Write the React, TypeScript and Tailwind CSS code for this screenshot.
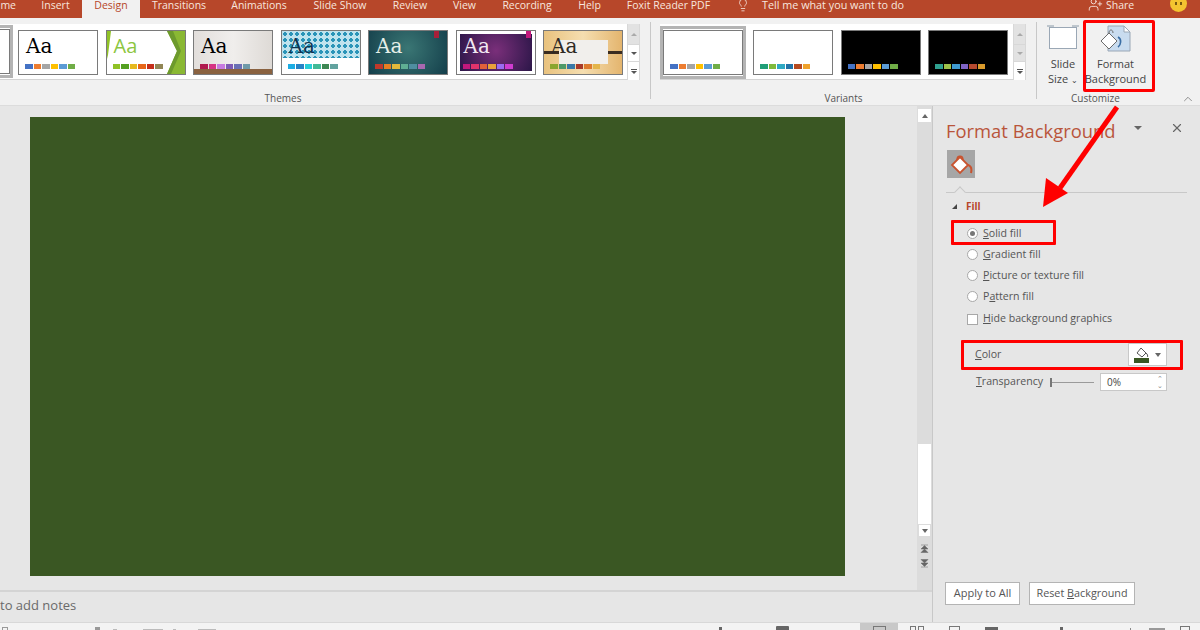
import type { ReactNode } from 'react';
import { ChevronUp, Lightbulb, UserPlus, X } from 'lucide-react';

type Theme = {
  box: string;
  aa: string;
  colors: string[];
  extra?: ReactNode;
  sans?: boolean;
};

const office = ['#4472c4', '#ed7d31', '#a5a5a5', '#ffc000', '#5b9bd5', '#70ad47'];

const themes: Theme[] = [
  { box: 'bg-white', aa: 'text-black', colors: office },
  {
    box: 'bg-white',
    aa: 'text-[#8cc63f]',
    sans: true,
    colors: ['#90c226', '#54a021', '#e6b91e', '#e76618', '#c42f1a', '#918655'],
    extra: (
      <svg className="absolute inset-0" width="78" height="43" viewBox="0 0 78 43">
        <polygon points="60,0 78,0 78,43 60,43 70,20" fill="#8ab833" />
        <polygon points="60,0 66,0 74,20 64,43 60,43 70,20" fill="#6d9a2d" />
        <polygon points="0,0 4,0 1,24 0,28" fill="#90c226" />
      </svg>
    ),
  },
  {
    box: 'bg-[linear-gradient(90deg,#e2dedb,#f0eeec_50%,#dedad6)]',
    aa: 'text-black',
    colors: ['#b01a4e', '#d63384', '#c77be0', '#7d5ab5', '#6a6fb5', '#6f9aa8'],
    extra: <div className="absolute inset-x-0 bottom-0 h-[5px] bg-[#8a6240]" />,
  },
  {
    box: 'bg-white',
    aa: 'text-[#0f3350]',
    colors: ['#1cade4', '#2683c6', '#27ced7', '#42ba97', '#3e8853', '#62a39f'],
    extra: (
      <div className="absolute inset-x-0 top-0 h-[27px] bg-[#2e9fc0] bg-[radial-gradient(circle,#2a94b8_42%,#bfe3ee_46%)] bg-[length:6px_6px]" />
    ),
  },
  {
    box: 'bg-[radial-gradient(circle_at_50%_40%,#3a7674,#143f4b)]',
    aa: 'text-[#e6efe9]',
    colors: ['#c0392b', '#e67e22', '#e2b93b', '#5fae93', '#4f8ea0', '#a868b0'],
    extra: <div className="absolute right-[8px] top-0 h-[7px] w-[5px] bg-[#a8203a]" />,
  },
  {
    box: 'bg-white',
    aa: 'text-[#f2e8f2]',
    colors: ['#c2187c', '#e0336b', '#e2603a', '#e8a13a', '#9a6cf0', '#cf3ccf'],
    extra: (
      <>
        <div className="absolute inset-x-[3px] bottom-[3px] top-[3px] bg-[radial-gradient(circle_at_50%_45%,#7a2f7a,#2b1648)]" />
        <div className="absolute right-[4px] top-0 h-[7px] w-[5px] bg-[#c2187c]" />
      </>
    ),
  },
  {
    box: 'bg-[linear-gradient(90deg,#e9c27e,#f5deb0_50%,#e4b56e)]',
    aa: 'text-[#2f2a25]',
    colors: ['#8aa62e', '#4f9a6a', '#3a78a8', '#a83a2a', '#dd7a2e', '#e4b54a'],
    extra: (
      <>
        <div className="absolute inset-x-0 top-[20px] h-[3px] bg-[#3a2c20]" />
        <div className="absolute left-[15px] top-[9px] h-[24px] w-[49px] bg-[#f1efec]" />
      </>
    ),
  },
];

const variants: Theme[] = [
  { box: 'bg-white', aa: '', colors: ['#1f9e77', '#7fba3c', '#2fa9c4', '#2273a8', '#b5491f', '#efa22b'] },
  { box: 'bg-black', aa: '', colors: office },
  { box: 'bg-black', aa: '', colors: ['#2fa08f', '#9cc24a', '#3f9ad0', '#7f63c4', '#b5492f', '#d99a2b'] },
];

function Swatches({ colors }: { colors: string[] }) {
  return (
    <div className="flex gap-[1px]">
      {colors.map((c, i) => (
        <div key={i} className="h-[5px] w-[7.5px]" style={{ background: c }} />
      ))}
    </div>
  );
}

function ThemeThumb({ t }: { t: Theme }) {
  return (
    <div className={`relative h-[45px] w-[80px] shrink-0 overflow-hidden border border-[#7a7a7a] ${t.box}`}>
      {t.extra}
      <div
        className={`absolute left-[7px] top-[2px] text-[20px] leading-[26px] ${t.aa}`}
        style={{ fontFamily: t.sans ? '"Open Sans", sans-serif' : '"DejaVu Serif", serif' }}
      >
        Aa
      </div>
      <div className="absolute bottom-[5px] left-[6px]">
        <Swatches colors={t.colors} />
      </div>
    </div>
  );
}

function VariantThumb({ t }: { t: Theme }) {
  return (
    <div className={`relative h-[45px] w-[80px] shrink-0 border border-[#7a7a7a] ${t.box}`}>
      <div className="absolute bottom-[5px] left-[6px]">
        <Swatches colors={t.colors} />
      </div>
    </div>
  );
}

function GalleryScroll({ active }: { active?: boolean }) {
  return (
    <div className="flex h-[56px] w-[13px] shrink-0 flex-col border-x border-[#d8d8d8] text-[#555]">
      <div className="flex h-[20px] items-center justify-center bg-[#e2e2e2]">
        <div className="h-0 w-0 border-x-[3px] border-b-[3px] border-x-transparent border-b-[#aaa]" />
      </div>
      <div className={`flex h-[18px] items-center justify-center border-y border-[#d8d8d8] ${active ? 'bg-white' : 'bg-[#e2e2e2]'}`}>
        <div className={`h-0 w-0 border-x-[3px] border-t-[3px] border-x-transparent ${active ? 'border-t-[#555]' : 'border-t-[#aaa]'}`} />
      </div>
      <div className="flex flex-1 flex-col items-center justify-center gap-[1px] bg-white">
        <div className="h-[1px] w-[6px] bg-[#555]" />
        <div className="h-0 w-0 border-x-[3px] border-t-[3px] border-x-transparent border-t-[#555]" />
      </div>
    </div>
  );
}

function Radio({ label, checked }: { label: [string, string, string]; checked?: boolean }) {
  return (
    <div className="flex h-[21px] items-center pl-[16px]">
      <div className="flex h-[11px] w-[11px] items-center justify-center rounded-full border border-[#a8a8a8] bg-white">
        {checked && <div className="h-[5px] w-[5px] rounded-full bg-[#777]" />}
      </div>
      <span className="ml-[5px] text-[10.6px] text-[#555]">
        {label[0]}
        <span className="underline">{label[1]}</span>
        {label[2]}
      </span>
    </div>
  );
}

function BucketIcon() {
  return (
    <svg width="24" height="24" viewBox="0 0 24 24">
      <path d="M11 5 L3 13 L11 21 L19 13 Z" fill="#fff" stroke="#c8532f" strokeWidth="1.8" />
      <path d="M8 8 C8 3 14 3 14 8" stroke="#c8532f" strokeWidth="1.4" fill="none" />
      <path d="M19 13 C22 14 23 17 22 21" stroke="#c8532f" strokeWidth="2" fill="none" />
    </svg>
  );
}

function DoubleArrow({ up }: { up?: boolean }) {
  return (
    <svg width="9" height="9" viewBox="0 0 9 9" className="shrink-0">
      {up ? (
        <path d="M1 1H8M4.5 1.5L8 5H1ZM4.5 5L8 8.5H1Z" fill="#666" stroke="#666" strokeWidth="0.5" />
      ) : (
        <path d="M1 8H8M4.5 7.5L8 4H1ZM4.5 4L8 0.5H1Z" fill="#666" stroke="#666" strokeWidth="0.5" />
      )}
    </svg>
  );
}

export default function App() {
  return (
    <div
      className="relative flex h-[630px] w-[1200px] flex-col overflow-hidden bg-[#f1f1f1] text-[#444]"
      style={{ fontFamily: '"Open Sans", "Liberation Sans", sans-serif' }}
    >
      {/* title tabs */}
      <div className="flex h-[18px] shrink-0 bg-[#b7472a] text-[10.5px] leading-[10px] text-[#f7e6df]">
        <div className="w-[29px] pr-[13px] text-right">me</div>
        <div className="w-[53px] text-center">Insert</div>
        <div className="h-[18px] w-[58px] bg-[#f1f1f1] text-center text-[#b7472a]">Design</div>
        <div className="w-[78px] text-center">Transitions</div>
        <div className="w-[82px] text-center">Animations</div>
        <div className="w-[80px] text-center">Slide Show</div>
        <div className="w-[60px] text-center">Review</div>
        <div className="w-[49px] text-center">View</div>
        <div className="w-[76px] text-center">Recording</div>
        <div className="w-[49px] text-center">Help</div>
        <div className="w-[109px] text-center">Foxit Reader PDF</div>
        <div className="ml-[13px] flex w-[26px] justify-start">
          <Lightbulb size={14} strokeWidth={1.4} className="-mt-[2px]" />
        </div>
        <div className="w-[326px] whitespace-nowrap text-[10.8px]">Tell me what you want to do</div>
        <div className="flex w-[82px] items-start">
          <UserPlus size={15} strokeWidth={1.4} className="-mt-[3px] mr-[3px]" />
          <span>Share</span>
        </div>
        <div className="-mt-[5px] flex h-[17px] w-[17px] items-center justify-center gap-[3px] rounded-full bg-[#f4c430]">
          <div className="h-[3px] w-[2px] bg-[#7a5a10]" />
          <div className="h-[3px] w-[2px] bg-[#7a5a10]" />
        </div>
      </div>

      {/* ribbon */}
      <div className="relative flex h-[88px] shrink-0 border-b border-[#dcdcdc] bg-[#f1f1f1]">
        <div className="w-[650px] shrink-0">
          <div className="mt-[6px] flex h-[56px] w-[640px] border-b border-[#d4d4d4] bg-white">
            <div className="mt-[1px] h-[53px] w-[13px] border-y-[3px] border-r-[3px] border-[#b4b4b4] bg-white">
              <div className="mt-[1px] h-[45px] border-y border-r border-[#7a7a7a]" />
            </div>
            <div className="ml-[5px] flex w-[609px] gap-[7.5px] pt-[6px]">
              {themes.map((t, i) => (
                <ThemeThumb key={i} t={t} />
              ))}
            </div>
            <GalleryScroll active />
          </div>
          <div className="w-[566px] pt-[11px] text-center text-[10px] leading-[14px] text-[#555]">Themes</div>
        </div>
        <div className="mb-[6px] mt-[4px] w-[1px] shrink-0 bg-[#c8c8c8]" />

        <div className="w-[385px] shrink-0">
          <div className="ml-[9px] mt-[6px] flex h-[56px] w-[366px] border-b border-[#d4d4d4] bg-white">
            <div className="mt-[2px] h-[53px] w-[86px] shrink-0 border-[3px] border-[#b4b4b4] bg-white">
              <div className="relative mt-[1px] h-[45px] w-[80px] border border-[#7a7a7a]">
                <div className="absolute bottom-[5px] left-[6px]">
                  <Swatches colors={office} />
                </div>
              </div>
            </div>
            <div className="ml-[7px] flex w-[260px] gap-[7.5px] pt-[6px]">
              {variants.map((t, i) => (
                <VariantThumb key={i} t={t} />
              ))}
            </div>
            <GalleryScroll />
          </div>
          <div className="pt-[11px] text-center text-[10px] leading-[14px] text-[#555]">Variants</div>
        </div>
        <div className="mb-[6px] mt-[4px] w-[1px] shrink-0 bg-[#c8c8c8]" />

        <div className="relative flex-1 text-[11px] leading-[15px] text-[#444]">
          <div className="flex h-[73px] pt-[7px]">
            <div className="flex w-[46px] flex-col items-center">
              <svg width="32" height="25" viewBox="0 0 32 25" className="ml-[6px] shrink-0">
                <rect x="2.5" y="2.5" width="27" height="21" fill="#fff" stroke="#9aa7b5" />
                <path d="M0 1H7M25 1H32" stroke="#8a9aa8" />
              </svg>
              <div className="ml-[6px] mt-[6px] text-center">
                Slide
                <br />
                Size <span className="text-[8px]">⌄</span>
              </div>
            </div>
            <div className="-ml-[3px] flex w-[71px] flex-col items-center">
              <svg width="32" height="28" viewBox="0 0 32 28" className="shrink-0">
                <path d="M8 1H24L30 7V26H8Z" fill="#c9dcef" stroke="#9aa7b5" />
                <path d="M24 1V7H30Z" fill="#fff" stroke="#9aa7b5" />
                <path d="M9 8L1 16L9 24L17 16Z" fill="#fff" stroke="#6b6b6b" />
                <path d="M9 8C9 4 13 4 13 8" stroke="#6b6b6b" fill="none" />
                <path d="M18 12C22 14 21 20 18 22" stroke="#3a6ea5" strokeWidth="1.6" fill="none" />
              </svg>
              <div className="mt-[3px] whitespace-nowrap text-center">
                Format
                <br />
                Background
              </div>
            </div>
          </div>
          <div className="w-[117px] text-center text-[10px] leading-[14px] text-[#555]">Customize</div>
          <ChevronUp size={14} strokeWidth={1.2} className="absolute bottom-[-1px] right-[5px] text-[#666]" />
        </div>
      </div>

      {/* workspace */}
      <div className="flex min-h-0 flex-1 bg-[#e6e6e6]">
        <div className="flex w-[932px] shrink-0 flex-col">
          <div className="flex h-[484px]">
            <div className="w-[917px] pl-[30px] pt-[11px]">
              <div className="h-[459px] w-[815px] bg-[#3a5723]" />
            </div>
            <div className="flex w-[15px] flex-col items-center bg-[#dcdcdc] pt-[3px]">
              <div className="flex h-[13px] w-[13px] items-center justify-center bg-white">
                <div className="h-0 w-0 border-x-[3px] border-b-[4px] border-x-transparent border-b-[#666]" />
              </div>
              <div className="mt-[322px] h-[80px] w-[13px] bg-white" />
              <div className="flex h-[13px] w-[13px] items-center justify-center border border-[#dcdcdc] bg-white">
                <div className="h-0 w-0 border-x-[3px] border-t-[4px] border-x-transparent border-t-[#666]" />
              </div>
              <div className="mt-[7px]">
                <DoubleArrow up />
              </div>
              <div className="mt-[6px]">
                <DoubleArrow />
              </div>
            </div>
          </div>
          <div className="flex h-[32px] items-center border-t-2 border-[#d4d4d4] pb-[2px] text-[13px] text-[#6a6a6a]">
            to add notes
          </div>
        </div>

        <div className="flex w-[268px] shrink-0 flex-col border-l border-[#c8c8c8]">
          <div className="flex h-[44px] shrink-0 items-center pl-[13px] pt-[5px]">
            <span className="w-[177px] whitespace-nowrap text-[18.4px] leading-[24px] text-[#b9553b]">Format Background</span>
            <div className="ml-[11px] mt-[-6px] h-0 w-0 border-x-[4px] border-t-[4px] border-x-transparent border-t-[#666]" />
            <X size={14} strokeWidth={2} className="ml-[28px] mt-[-6px] text-[#666]" />
          </div>
          <div className="ml-[14px] flex h-[28px] w-[28px] shrink-0 items-center justify-center bg-[#a6a6a6]">
            <BucketIcon />
          </div>
          <div className="relative ml-[13px] mt-[14px] h-[1px] w-[241px] shrink-0 bg-[#c8c8c8]">
            <div className="absolute left-[10px] top-[-4px] h-[8px] w-[8px] rotate-45 border-l border-t border-[#c8c8c8] bg-[#e6e6e6]" />
          </div>
          <div className="flex h-[27px] shrink-0 items-center pl-[19px]">
            <div className="h-0 w-0 border-b-[5px] border-l-[5px] border-b-[#444] border-l-transparent" />
            <span className="ml-[9px] text-[10px] font-bold text-[#b7472a]">Fill</span>
          </div>
          <div className="flex shrink-0 flex-col pl-[18px] pt-[3px]">
            <Radio label={['', 'S', 'olid fill']} checked />
            <Radio label={['', 'G', 'radient fill']} />
            <Radio label={['', 'P', 'icture or texture fill']} />
            <Radio label={['P', 'a', 'ttern fill']} />
          </div>
          <div className="flex h-[24px] shrink-0 items-center pl-[34px]">
            <div className="h-[11px] w-[11px] border border-[#a8a8a8] bg-white" />
            <span className="ml-[5px] text-[10.6px] text-[#555]">
              <span className="underline">H</span>ide background graphics
            </span>
          </div>
          <div className="mt-[12px] flex h-[23px] shrink-0 items-center pl-[42px]">
            <span className="w-[153px] text-[10.6px] text-[#555]">
              <span className="underline">C</span>olor
            </span>
            <div className="flex h-[23px] w-[39px] items-center justify-center gap-[5px] border border-[#c8c8c8] bg-white">
              <svg width="16" height="16" viewBox="0 0 16 16">
                <path d="M7 1L3 6L8 10L12 6Z" fill="#fff" stroke="#555" />
                <path d="M12 6C13.5 7 14 9 13.5 10" stroke="#555" fill="none" />
                <rect x="0" y="11" width="15" height="5" fill="#3a5723" />
              </svg>
              <div className="h-0 w-0 border-x-[3.5px] border-t-[4px] border-x-transparent border-t-[#666]" />
            </div>
          </div>
          <div className="mt-[7px] flex h-[18px] shrink-0 items-center pl-[43px]">
            <span className="w-[74px] whitespace-nowrap text-[10.6px] text-[#555]">
              <span className="underline">T</span>ransparency
            </span>
            <div className="relative h-[1px] w-[44px] bg-[#9a9a9a]">
              <div className="absolute left-0 top-[-4px] h-[9px] w-[2px] bg-[#777]" />
            </div>
            <div className="ml-[6px] flex h-[18px] w-[67px] items-center justify-between border border-[#c8c8c8] bg-white pl-[6px] pr-[3px] text-[10px]">
              <span>0%</span>
              <span className="text-[7px] leading-[7px] text-[#888]">
                ⌃
                <br />⌄
              </span>
            </div>
          </div>
          <div className="mt-auto flex gap-[9px] pb-[17px] pl-[12px]">
            <div className="flex h-[23px] w-[75px] items-center justify-center border border-[#b4b4b4] bg-white text-[11px] text-[#555]">
              Apply to All
            </div>
            <div className="flex h-[23px] w-[106px] items-center justify-center border border-[#b4b4b4] bg-white text-[10.8px] text-[#555]">
              <span>
                Reset <span className="underline">B</span>ackground
              </span>
            </div>
          </div>
        </div>
      </div>

      {/* status bar, mostly cut off by the crop: only the tops of its icons show */}
      <div className="flex h-[8px] shrink-0 items-end overflow-hidden border-t border-[#d8d8d8] bg-[#f3f3f3]">
        <div className="ml-[2px] h-[3px] w-[6px] border border-b-0 border-[#999]" />
        <div className="ml-[87px] h-[3px] w-[5px] bg-[#999]" />
        <div className="ml-[13px] h-[1px] w-[4px] bg-[#bbb]" />
        <div className="ml-[26px] h-[1px] w-[20px] bg-[#bbb]" />
        <div className="ml-[10px] h-[1px] w-[3px] bg-[#bbb]" />
        <div className="ml-[22px] h-[1px] w-[18px] bg-[#bbb]" />
        <div className="ml-[503px] h-[3px] w-[3px] bg-[#666]" />
        <div className="ml-[54px] h-[4px] w-[13px] rounded-t-[1px] bg-[#666]" />
        <div className="ml-[71px] flex h-[7px] w-[38px] items-end justify-center bg-[#c8c8c8]">
          <div className="h-[4px] w-[13px] border border-b-0 border-[#777]" />
        </div>
        <div className="ml-[12px] h-[4px] w-[6px] border border-b-0 border-[#777]" />
        <div className="ml-[2px] h-[4px] w-[6px] border border-b-0 border-[#777]" />
        <div className="ml-[25px] h-[4px] w-[11px] border border-b-0 border-[#777]" />
        <div className="ml-[25px] h-[3px] w-[13px] bg-[#666]" />
        <div className="ml-[62px] h-[3px] w-[3px] bg-[#666]" />
        <div className="ml-[67px] h-[2px] w-[1px] bg-[#888]" />
        <div className="ml-[18px] h-[2px] w-[16px] bg-[#999]" />
        <div className="ml-[15px] h-[4px] w-[10px] border border-b-0 border-[#777]" />
      </div>

      {/* red annotations on top of the screenshot */}
      <div className="absolute left-[1083px] top-[20px] h-[72px] w-[72px] rounded-[2px] border-[3px] border-[#f00]" />
      <div className="absolute left-[951px] top-[220px] h-[25px] w-[105px] rounded-[1px] border-[3px] border-[#f00]" />
      <div className="absolute left-[961px] top-[340px] h-[30px] w-[222px] rounded-[1px] border-[3px] border-[#f00]" />
      <svg className="absolute left-[1030px] top-[100px]" width="100" height="115" viewBox="0 0 100 115">
        <path d="M87 7L30 88" stroke="#f00" strokeWidth="5" />
        <polygon points="13,107 16,78 38,93" fill="#f00" />
      </svg>
    </div>
  );
}
